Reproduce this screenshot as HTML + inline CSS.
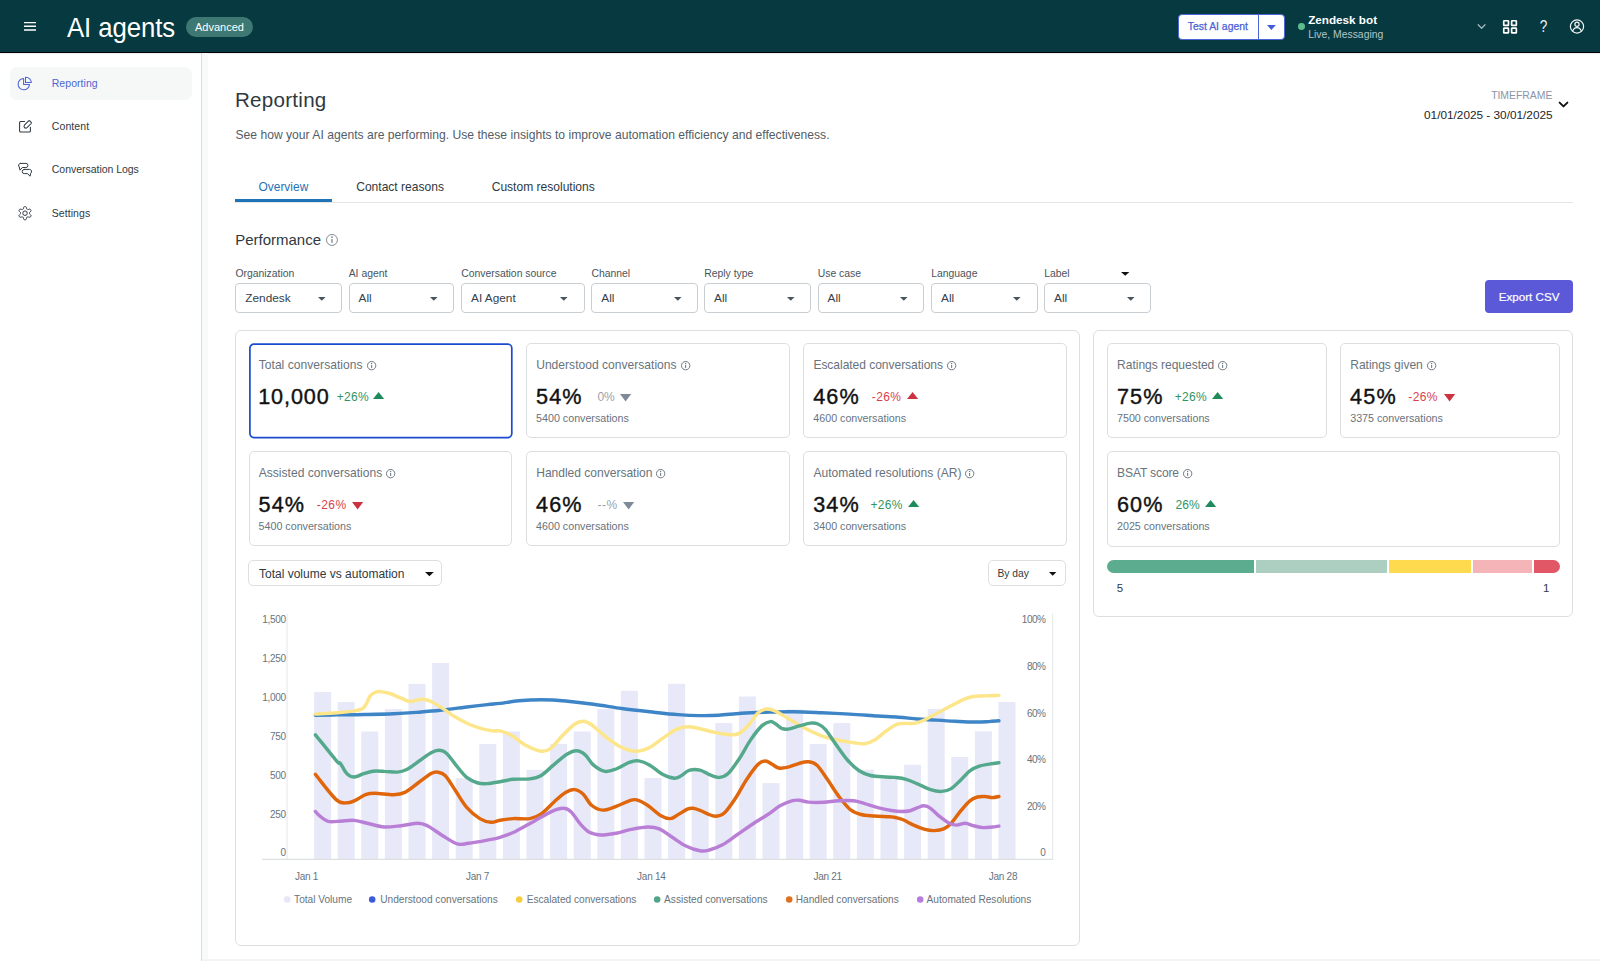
<!DOCTYPE html>
<html lang="en"><head><meta charset="utf-8"><title>AI agents - Reporting</title>
<style>
html,body{margin:0;padding:0;}
body{width:1600px;height:961px;position:relative;overflow:hidden;background:#fff;font-family:'Liberation Sans',Arial,sans-serif;color:#2f3941;-webkit-font-smoothing:antialiased;}
.t{position:absolute;white-space:pre;}
.b{position:absolute;box-sizing:border-box;}
svg{overflow:visible;display:block;}
</style></head><body>

<div class="b" style="left:0px;top:0px;width:1600px;height:52px;background:#063940;"></div>
<div class="b" style="left:0px;top:52px;width:1600px;height:1px;background:#020208;"></div>
<div class="b" style="left:0px;top:53px;width:1600px;height:1px;background:rgba(0,0,0,0.07);"></div>
<svg class="b" style="left:22px;top:20px" width="16" height="12" viewBox="22 20 16 12"><path d="M24 22.6H36M24 26.3H36M24 30H36" stroke="#fff" stroke-width="1.4" fill="none"/></svg>
<div class="t" style="left:67.0px;top:12px;font-size:27.3px;line-height:31px;color:#fff;font-weight:400;letter-spacing:-0.1px;transform:scaleX(0.944);transform-origin:0 50%;">AI agents</div>
<div class="b" style="left:186.2px;top:16.5px;width:66.4px;height:20.3px;background:#3d7873;border-radius:10.2px;"></div>
<div class="t" style="left:195px;top:21px;font-size:11px;line-height:12px;color:#fff;font-weight:400;">Advanced</div>
<div class="b" style="left:1178px;top:13.7px;width:106.6px;height:26.3px;background:#fff;border:1px solid #4b64d6;border-radius:4px;"></div>
<div class="b" style="left:1257.7px;top:14px;width:1px;height:25.6px;background:#4b64d6;"></div>
<div class="t" style="left:1187.8px;top:21px;font-size:10.4px;line-height:11px;color:#4a60d4;font-weight:400;-webkit-text-stroke:0.25px #4a60d4;">Test AI agent</div>
<svg class="b" style="left:1267.3px;top:24.6px" width="8.8" height="5.0" viewBox="0 0 8.8 5.0"><polygon points="0,0 8.8,0 4.4,5.0" fill="#3f5bd5"/></svg>
<div class="b" style="left:1298.1px;top:23.3px;width:6.8px;height:6.8px;background:#5ebb8e;border-radius:50%;"></div>
<div class="t" style="left:1308.2px;top:13px;font-size:11.7px;line-height:13px;color:#fff;font-weight:700;">Zendesk bot</div>
<div class="t" style="left:1308.2px;top:29px;font-size:10.4px;line-height:11px;color:#b4c6c9;font-weight:400;">Live, Messaging</div>
<svg class="b" style="left:1476px;top:22px" width="12" height="10" viewBox="1476 22 12 10"><path d="M1478.2 24.8 L1481.6 28.3 L1485 24.8" stroke="#a3b6b9" stroke-width="1.3" fill="none" stroke-linecap="round" stroke-linejoin="round"/></svg>
<svg class="b" style="left:1502px;top:19px" width="16" height="16" viewBox="1502 19 16 16"><g fill="none" stroke="#fff" stroke-width="1.7"><rect x="1503.75" y="20.75" width="4.7" height="4.7" rx="0.5"/><rect x="1511.65" y="20.75" width="4.7" height="4.7" rx="0.5"/><rect x="1503.75" y="28.2" width="4.7" height="4.7" rx="0.5"/><rect x="1511.65" y="28.2" width="4.7" height="4.7" rx="0.5"/></g></svg>
<div class="t" style="left:1538.6px;top:17px;font-size:16.2px;line-height:18px;color:#f0f4f4;font-weight:400;transform:scaleX(0.84);transform-origin:50% 50%;">?</div>
<svg class="b" style="left:1569px;top:18px" width="16" height="17" viewBox="1569 18 16 17"><g fill="none" stroke="#f2f5f5" stroke-width="1.2"><circle cx="1577" cy="26.5" r="6.6"/><circle cx="1577" cy="24.3" r="2.1"/><path d="M1572.6 31.2 C1573.6 28.4 1575.2 27.6 1577 27.6 C1578.8 27.6 1580.4 28.4 1581.4 31.2"/></g></svg>
<div class="b" style="left:201px;top:53px;width:1.2px;height:908px;background:#d9dce3;"></div>
<div class="b" style="left:202.2px;top:53px;width:5.8px;height:908px;background:#f8f9f9;"></div>
<div class="b" style="left:10.3px;top:66.6px;width:181.7px;height:33.4px;background:#f6f8f8;border-radius:7px;"></div>
<div class="t" style="left:51.7px;top:77px;font-size:10.5px;line-height:12px;color:#4e66d3;font-weight:400;letter-spacing:0.06px;">Reporting</div>
<div class="t" style="left:51.8px;top:120px;font-size:10.5px;line-height:12px;color:#2f3941;font-weight:400;letter-spacing:0.08px;">Content</div>
<div class="t" style="left:51.8px;top:163px;font-size:10.5px;line-height:12px;color:#2f3941;font-weight:400;letter-spacing:-0.03px;">Conversation Logs</div>
<div class="t" style="left:51.8px;top:207px;font-size:10.5px;line-height:12px;color:#2f3941;font-weight:400;letter-spacing:0.06px;">Settings</div>
<svg class="b" style="left:17px;top:75px" width="16" height="17" viewBox="17 75 16 17"><g fill="none" stroke="#4c63d2" stroke-width="1.05" stroke-linejoin="round"><path d="M23.6 78.4 A5.7 5.7 0 1 0 29.5 84.4 H23.6 Z"/><path d="M25.5 77.2 A5.6 5.6 0 0 1 31.3 82.5 H25.5 Z"/></g></svg>
<svg class="b" style="left:17px;top:118px" width="16" height="16" viewBox="17 118 16 16"><g fill="none" stroke="#2f3941" stroke-width="1.05" stroke-linecap="round" stroke-linejoin="round"><path d="M24.6 121.5 H20.6 A1 1 0 0 0 19.6 122.5 V131 A1 1 0 0 0 20.6 132 H29.4 A1 1 0 0 0 30.4 131 V127.2"/><path d="M24.4 125.2 L28.6 120.9 A0.8 0.8 0 0 1 29.7 120.9 L31.2 122.4 A0.8 0.8 0 0 1 31.2 123.5 L27 127.7 C26.2 128.3 24.9 128.2 24.5 127.6 C24 127 24 125.8 24.4 125.2 Z"/></g></svg>
<svg class="b" style="left:17px;top:161px" width="16" height="17" viewBox="17 161 16 17"><g fill="none" stroke="#2f3941" stroke-width="1.0" stroke-linecap="round" stroke-linejoin="round"><path d="M20.5 163.4 H25.9 A2.05 2.05 0 0 1 25.9 167.5 H22.3 L20 170.2 L19.3 167 A2.05 2.05 0 0 1 20.5 163.4 Z"/><path d="M24.3 169.4 H29.5 A2.1 2.1 0 0 1 30.7 173.2 L30.1 176.2 L27.4 173.6 H24.3 A2.1 2.1 0 0 1 24.3 169.4 Z"/></g></svg>
<svg class="b" style="left:17px;top:205px" width="16" height="17" viewBox="17 205 16 17"><g fill="none" stroke="#2f3941" stroke-width="1.0" stroke-linejoin="round"><path d="M29.50 213.20 L29.49 212.89 L29.46 212.57 L29.92 212.15 L30.50 211.62 L31.00 211.01 L31.03 210.52 L30.83 210.10 L30.60 209.70 L30.34 209.32 L29.90 209.09 L29.12 209.22 L28.37 209.46 L27.77 209.65 L27.52 209.47 L27.25 209.30 L26.97 209.16 L26.69 209.03 L26.55 208.42 L26.39 207.64 L26.11 206.91 L25.69 206.64 L25.23 206.60 L24.77 206.60 L24.31 206.64 L23.89 206.91 L23.61 207.64 L23.45 208.42 L23.31 209.03 L23.03 209.16 L22.75 209.30 L22.48 209.47 L22.23 209.65 L21.63 209.46 L20.88 209.22 L20.10 209.09 L19.66 209.32 L19.40 209.70 L19.17 210.10 L18.97 210.52 L19.00 211.01 L19.50 211.62 L20.08 212.15 L20.54 212.57 L20.51 212.89 L20.50 213.20 L20.51 213.51 L20.54 213.83 L20.08 214.25 L19.50 214.78 L19.00 215.39 L18.97 215.88 L19.17 216.30 L19.40 216.70 L19.66 217.08 L20.10 217.31 L20.88 217.18 L21.63 216.94 L22.23 216.75 L22.48 216.93 L22.75 217.10 L23.03 217.24 L23.31 217.37 L23.45 217.98 L23.61 218.76 L23.89 219.49 L24.31 219.76 L24.77 219.80 L25.23 219.80 L25.69 219.76 L26.11 219.49 L26.39 218.76 L26.55 217.98 L26.69 217.37 L26.97 217.24 L27.25 217.10 L27.52 216.93 L27.77 216.75 L28.37 216.94 L29.12 217.18 L29.90 217.31 L30.34 217.08 L30.60 216.70 L30.83 216.30 L31.03 215.88 L31.00 215.39 L30.50 214.78 L29.92 214.25 L29.46 213.83 L29.49 213.51 Z"/><circle cx="25" cy="213.2" r="2.25"/></g></svg>
<div class="t" style="left:235.0px;top:88px;font-size:20.6px;line-height:23px;color:#2f3941;font-weight:400;letter-spacing:0.25px;">Reporting</div>
<div class="t" style="left:235.5px;top:128px;font-size:12.14px;line-height:14px;color:#525d67;font-weight:400;">See how your AI agents are performing. Use these insights to improve automation efficiency and effectiveness.</div>
<div class="t" style="right:47.700000000000045px;top:90px;font-size:10.4px;line-height:11px;color:#8a94a6;font-weight:400;">TIMEFRAME</div>
<div class="t" style="right:47.40000000000009px;top:108px;font-size:11.8px;line-height:14px;color:#1f2529;font-weight:400;">01/01/2025 - 30/01/2025</div>
<svg class="b" style="left:1557px;top:100px" width="13" height="9" viewBox="1557 100 13 9"><path d="M1559.6 102.6 L1563.5 106.4 L1567.4 102.6" stroke="#111" stroke-width="1.9" fill="none" stroke-linecap="round" stroke-linejoin="round"/></svg>
<div class="t" style="left:258.5px;top:180px;font-size:11.95px;line-height:14px;color:#1f73b7;font-weight:400;">Overview</div>
<div class="t" style="left:356.2px;top:180px;font-size:12.05px;line-height:14px;color:#2f3941;font-weight:400;">Contact reasons</div>
<div class="t" style="left:491.7px;top:180px;font-size:12.05px;line-height:14px;color:#2f3941;font-weight:400;">Custom resolutions</div>
<div class="b" style="left:235px;top:202px;width:1338px;height:1px;background:#e3e6e8;"></div>
<div class="b" style="left:235px;top:199.4px;width:97.2px;height:2.8px;background:#1f73b7;"></div>
<div class="t" style="left:235.2px;top:231px;font-size:15px;line-height:17px;color:#2f3941;font-weight:400;">Performance</div>
<svg class="b" style="left:325.15px;top:233.45px" width="13.90" height="13.90" viewBox="-6.95 -6.95 13.90 13.90"><circle cx="0" cy="0" r="5.48" fill="none" stroke="#7b8690" stroke-width="0.95"/><rect x="-0.66" y="-0.93" width="1.32" height="3.83" fill="#7b8690"/><circle cx="0" cy="-2.78" r="0.86" fill="#7b8690"/></svg>
<div class="t" style="left:235.45px;top:268px;font-size:10.4px;line-height:11px;color:#49545c;font-weight:400;">Organization</div>
<div class="b" style="left:235.25px;top:283.4px;width:106.75px;height:29.4px;border:1px solid #c9ced2;border-radius:4px;background:#fff;"></div>
<div class="t" style="left:245.35px;top:291px;font-size:11.8px;line-height:14px;color:#36414b;font-weight:400;">Zendesk</div>
<svg class="b" style="left:317.9px;top:296.54999999999995px" width="7.6" height="3.7" viewBox="0 0 7.6 3.7"><polygon points="0,0 7.6,0 3.8,3.7" fill="#49545c"/></svg>
<div class="t" style="left:348.7px;top:268px;font-size:10.4px;line-height:11px;color:#49545c;font-weight:400;">AI agent</div>
<div class="b" style="left:348.5px;top:283.4px;width:105.75px;height:29.4px;border:1px solid #c9ced2;border-radius:4px;background:#fff;"></div>
<div class="t" style="left:358.6px;top:291px;font-size:11.8px;line-height:14px;color:#36414b;font-weight:400;">All</div>
<svg class="b" style="left:430.15px;top:296.54999999999995px" width="7.6" height="3.7" viewBox="0 0 7.6 3.7"><polygon points="0,0 7.6,0 3.8,3.7" fill="#49545c"/></svg>
<div class="t" style="left:461.2px;top:268px;font-size:10.4px;line-height:11px;color:#49545c;font-weight:400;">Conversation source</div>
<div class="b" style="left:461px;top:283.4px;width:123.5px;height:29.4px;border:1px solid #c9ced2;border-radius:4px;background:#fff;"></div>
<div class="t" style="left:471.1px;top:291px;font-size:11.8px;line-height:14px;color:#36414b;font-weight:400;">AI Agent</div>
<svg class="b" style="left:560.4000000000001px;top:296.54999999999995px" width="7.6" height="3.7" viewBox="0 0 7.6 3.7"><polygon points="0,0 7.6,0 3.8,3.7" fill="#49545c"/></svg>
<div class="t" style="left:591.45px;top:268px;font-size:10.4px;line-height:11px;color:#49545c;font-weight:400;">Channel</div>
<div class="b" style="left:591.25px;top:283.4px;width:106.54999999999995px;height:29.4px;border:1px solid #c9ced2;border-radius:4px;background:#fff;"></div>
<div class="t" style="left:601.35px;top:291px;font-size:11.8px;line-height:14px;color:#36414b;font-weight:400;">All</div>
<svg class="b" style="left:673.7px;top:296.54999999999995px" width="7.6" height="3.7" viewBox="0 0 7.6 3.7"><polygon points="0,0 7.6,0 3.8,3.7" fill="#49545c"/></svg>
<div class="t" style="left:704.2px;top:268px;font-size:10.4px;line-height:11px;color:#49545c;font-weight:400;">Reply type</div>
<div class="b" style="left:704px;top:283.4px;width:106.79999999999995px;height:29.4px;border:1px solid #c9ced2;border-radius:4px;background:#fff;"></div>
<div class="t" style="left:714.1px;top:291px;font-size:11.8px;line-height:14px;color:#36414b;font-weight:400;">All</div>
<svg class="b" style="left:786.7px;top:296.54999999999995px" width="7.6" height="3.7" viewBox="0 0 7.6 3.7"><polygon points="0,0 7.6,0 3.8,3.7" fill="#49545c"/></svg>
<div class="t" style="left:817.7px;top:268px;font-size:10.4px;line-height:11px;color:#49545c;font-weight:400;">Use case</div>
<div class="b" style="left:817.5px;top:283.4px;width:106.5px;height:29.4px;border:1px solid #c9ced2;border-radius:4px;background:#fff;"></div>
<div class="t" style="left:827.6px;top:291px;font-size:11.8px;line-height:14px;color:#36414b;font-weight:400;">All</div>
<svg class="b" style="left:899.9000000000001px;top:296.54999999999995px" width="7.6" height="3.7" viewBox="0 0 7.6 3.7"><polygon points="0,0 7.6,0 3.8,3.7" fill="#49545c"/></svg>
<div class="t" style="left:931.2px;top:268px;font-size:10.4px;line-height:11px;color:#49545c;font-weight:400;">Language</div>
<div class="b" style="left:931px;top:283.4px;width:106.5px;height:29.4px;border:1px solid #c9ced2;border-radius:4px;background:#fff;"></div>
<div class="t" style="left:941.1px;top:291px;font-size:11.8px;line-height:14px;color:#36414b;font-weight:400;">All</div>
<svg class="b" style="left:1013.4000000000001px;top:296.54999999999995px" width="7.6" height="3.7" viewBox="0 0 7.6 3.7"><polygon points="0,0 7.6,0 3.8,3.7" fill="#49545c"/></svg>
<div class="t" style="left:1044.2px;top:268px;font-size:10.4px;line-height:11px;color:#49545c;font-weight:400;">Label</div>
<div class="b" style="left:1044px;top:283.4px;width:107.0px;height:29.4px;border:1px solid #c9ced2;border-radius:4px;background:#fff;"></div>
<div class="t" style="left:1054.1px;top:291px;font-size:11.8px;line-height:14px;color:#36414b;font-weight:400;">All</div>
<svg class="b" style="left:1126.9px;top:296.54999999999995px" width="7.6" height="3.7" viewBox="0 0 7.6 3.7"><polygon points="0,0 7.6,0 3.8,3.7" fill="#49545c"/></svg>
<svg class="b" style="left:1120.6px;top:272.3px" width="8.4" height="3.8" viewBox="0 0 8.4 3.8"><polygon points="0,0 8.4,0 4.2,3.8" fill="#111"/></svg>
<div class="b" style="left:1485px;top:280px;width:88px;height:33px;background:#5c59d9;border-radius:4px;"></div>
<div class="t" style="left:1379.1px;width:300px;text-align:center;top:291px;font-size:11.6px;line-height:12px;color:#fff;font-weight:400;-webkit-text-stroke:0.2px #fff;">Export CSV</div>
<div class="b" style="left:235px;top:330px;width:845px;height:616px;border:1px solid #dcdfe2;border-radius:6px;"></div>
<div class="b" style="left:1093px;top:330px;width:480px;height:287px;border:1px solid #dcdfe2;border-radius:6px;"></div>
<svg class="b" style="left:247.5px;top:342px" width="265.5" height="97" viewBox="-1 -1 265.5 97"><rect x="0.9" y="1.2" width="261.9" height="93.4" rx="4" fill="#fff" stroke="#1b4bcf" stroke-width="1.7"/></svg>
<div class="t" style="left:258.7px;top:358px;font-size:12.05px;line-height:14px;color:#68737d;font-weight:400;letter-spacing:0.041px;">Total conversations</div>
<div class="t" style="left:258.2px;top:384px;font-size:21.6px;line-height:25px;color:#111;font-weight:400;letter-spacing:0.9px;-webkit-text-stroke:0.4px #111;">10,000</div>
<div class="b" style="left:526px;top:343px;width:263.5px;height:95px;border:1px solid #dcdfe2;border-radius:5px;background:#fff;"></div>
<div class="t" style="left:536.2px;top:358px;font-size:12.05px;line-height:14px;color:#68737d;font-weight:400;letter-spacing:0.018px;">Understood conversations</div>
<div class="t" style="left:536.0px;top:384px;font-size:21.6px;line-height:25px;color:#111;font-weight:400;letter-spacing:1.15px;-webkit-text-stroke:0.4px #111;">54%</div>
<div class="b" style="left:803.2px;top:343px;width:263.5px;height:95px;border:1px solid #dcdfe2;border-radius:5px;background:#fff;"></div>
<div class="t" style="left:813.4000000000001px;top:358px;font-size:12.05px;line-height:14px;color:#68737d;font-weight:400;letter-spacing:-0.043px;">Escalated conversations</div>
<div class="t" style="left:813.2px;top:384px;font-size:21.6px;line-height:25px;color:#111;font-weight:400;letter-spacing:1.15px;-webkit-text-stroke:0.4px #111;">46%</div>
<div class="b" style="left:248.5px;top:451px;width:263.5px;height:95px;border:1px solid #dcdfe2;border-radius:5px;background:#fff;"></div>
<div class="t" style="left:258.7px;top:466px;font-size:12.05px;line-height:14px;color:#68737d;font-weight:400;letter-spacing:0.017px;">Assisted conversations</div>
<div class="t" style="left:258.5px;top:492px;font-size:21.6px;line-height:25px;color:#111;font-weight:400;letter-spacing:1.15px;-webkit-text-stroke:0.4px #111;">54%</div>
<div class="b" style="left:526px;top:451px;width:263.5px;height:95px;border:1px solid #dcdfe2;border-radius:5px;background:#fff;"></div>
<div class="t" style="left:536.2px;top:466px;font-size:12.05px;line-height:14px;color:#68737d;font-weight:400;letter-spacing:-0.012px;">Handled conversation</div>
<div class="t" style="left:536.0px;top:492px;font-size:21.6px;line-height:25px;color:#111;font-weight:400;letter-spacing:1.15px;-webkit-text-stroke:0.4px #111;">46%</div>
<div class="b" style="left:803.2px;top:451px;width:263.5px;height:95px;border:1px solid #dcdfe2;border-radius:5px;background:#fff;"></div>
<div class="t" style="left:813.4000000000001px;top:466px;font-size:12.05px;line-height:14px;color:#68737d;font-weight:400;letter-spacing:0.001px;">Automated resolutions (AR)</div>
<div class="t" style="left:813.2px;top:492px;font-size:21.6px;line-height:25px;color:#111;font-weight:400;letter-spacing:1.15px;-webkit-text-stroke:0.4px #111;">34%</div>
<div class="b" style="left:1106.9px;top:343px;width:219.8px;height:95px;border:1px solid #dcdfe2;border-radius:5px;background:#fff;"></div>
<div class="t" style="left:1117.1000000000001px;top:358px;font-size:12.05px;line-height:14px;color:#68737d;font-weight:400;letter-spacing:-0.034px;">Ratings requested</div>
<div class="t" style="left:1116.9px;top:384px;font-size:21.6px;line-height:25px;color:#111;font-weight:400;letter-spacing:1.15px;-webkit-text-stroke:0.4px #111;">75%</div>
<div class="b" style="left:1340.1px;top:343px;width:219.8px;height:95px;border:1px solid #dcdfe2;border-radius:5px;background:#fff;"></div>
<div class="t" style="left:1350.3px;top:358px;font-size:12.05px;line-height:14px;color:#68737d;font-weight:400;letter-spacing:-0.046px;">Ratings given</div>
<div class="t" style="left:1350.1px;top:384px;font-size:21.6px;line-height:25px;color:#111;font-weight:400;letter-spacing:1.15px;-webkit-text-stroke:0.4px #111;">45%</div>
<div class="b" style="left:1106.9px;top:451px;width:453px;height:95.5px;border:1px solid #dcdfe2;border-radius:5px;background:#fff;"></div>
<div class="t" style="left:1117.1000000000001px;top:466px;font-size:12.05px;line-height:14px;color:#68737d;font-weight:400;letter-spacing:-0.137px;">BSAT score</div>
<div class="t" style="left:1116.9px;top:492px;font-size:21.6px;line-height:25px;color:#111;font-weight:400;letter-spacing:1.15px;-webkit-text-stroke:0.4px #111;">60%</div>
<svg class="b" style="left:365.55px;top:359.55px" width="11.30" height="11.30" viewBox="-5.65 -5.65 11.30 11.30"><circle cx="0" cy="0" r="4.18" fill="none" stroke="#68737d" stroke-width="0.95"/><rect x="-0.52" y="-0.72" width="1.03" height="3.00" fill="#68737d"/><circle cx="0" cy="-2.17" r="0.67" fill="#68737d"/></svg>
<svg class="b" style="left:679.55px;top:359.55px" width="11.30" height="11.30" viewBox="-5.65 -5.65 11.30 11.30"><circle cx="0" cy="0" r="4.18" fill="none" stroke="#68737d" stroke-width="0.95"/><rect x="-0.52" y="-0.72" width="1.03" height="3.00" fill="#68737d"/><circle cx="0" cy="-2.17" r="0.67" fill="#68737d"/></svg>
<svg class="b" style="left:945.95px;top:359.55px" width="11.30" height="11.30" viewBox="-5.65 -5.65 11.30 11.30"><circle cx="0" cy="0" r="4.18" fill="none" stroke="#68737d" stroke-width="0.95"/><rect x="-0.52" y="-0.72" width="1.03" height="3.00" fill="#68737d"/><circle cx="0" cy="-2.17" r="0.67" fill="#68737d"/></svg>
<svg class="b" style="left:385.25px;top:467.55px" width="11.30" height="11.30" viewBox="-5.65 -5.65 11.30 11.30"><circle cx="0" cy="0" r="4.18" fill="none" stroke="#68737d" stroke-width="0.95"/><rect x="-0.52" y="-0.72" width="1.03" height="3.00" fill="#68737d"/><circle cx="0" cy="-2.17" r="0.67" fill="#68737d"/></svg>
<svg class="b" style="left:655.45px;top:467.55px" width="11.30" height="11.30" viewBox="-5.65 -5.65 11.30 11.30"><circle cx="0" cy="0" r="4.18" fill="none" stroke="#68737d" stroke-width="0.95"/><rect x="-0.52" y="-0.72" width="1.03" height="3.00" fill="#68737d"/><circle cx="0" cy="-2.17" r="0.67" fill="#68737d"/></svg>
<svg class="b" style="left:964.35px;top:467.55px" width="11.30" height="11.30" viewBox="-5.65 -5.65 11.30 11.30"><circle cx="0" cy="0" r="4.18" fill="none" stroke="#68737d" stroke-width="0.95"/><rect x="-0.52" y="-0.72" width="1.03" height="3.00" fill="#68737d"/><circle cx="0" cy="-2.17" r="0.67" fill="#68737d"/></svg>
<svg class="b" style="left:1217.25px;top:359.55px" width="11.30" height="11.30" viewBox="-5.65 -5.65 11.30 11.30"><circle cx="0" cy="0" r="4.18" fill="none" stroke="#68737d" stroke-width="0.95"/><rect x="-0.52" y="-0.72" width="1.03" height="3.00" fill="#68737d"/><circle cx="0" cy="-2.17" r="0.67" fill="#68737d"/></svg>
<svg class="b" style="left:1425.65px;top:359.55px" width="11.30" height="11.30" viewBox="-5.65 -5.65 11.30 11.30"><circle cx="0" cy="0" r="4.18" fill="none" stroke="#68737d" stroke-width="0.95"/><rect x="-0.52" y="-0.72" width="1.03" height="3.00" fill="#68737d"/><circle cx="0" cy="-2.17" r="0.67" fill="#68737d"/></svg>
<svg class="b" style="left:1181.85px;top:467.55px" width="11.30" height="11.30" viewBox="-5.65 -5.65 11.30 11.30"><circle cx="0" cy="0" r="4.18" fill="none" stroke="#68737d" stroke-width="0.95"/><rect x="-0.52" y="-0.72" width="1.03" height="3.00" fill="#68737d"/><circle cx="0" cy="-2.17" r="0.67" fill="#68737d"/></svg>
<div class="t" style="left:336.65px;top:390px;font-size:12px;line-height:14px;color:#2f9461;font-weight:400;letter-spacing:0.3px;">+26%</div>
<svg class="b" style="left:373.4px;top:392.2px" width="11.2" height="6.9" viewBox="0 0 11.2 6.9"><polygon points="0,6.9 5.6,0 11.2,6.9" fill="#1f8a5b"/></svg>
<div class="t" style="left:597.4px;top:390px;font-size:12px;line-height:14px;color:#9aa3ad;font-weight:400;">0%</div>
<svg class="b" style="left:620.0px;top:393.8px" width="11.2" height="7.4" viewBox="0 0 11.2 7.4"><polygon points="0,0 11.2,0 5.6,7.4" fill="#7f8a99"/></svg>
<div class="t" style="left:536.1px;top:412px;font-size:10.7px;line-height:12px;color:#68737d;font-weight:400;">5400 conversations</div>
<div class="t" style="left:871.75px;top:390px;font-size:12px;line-height:14px;color:#d93f4c;font-weight:400;letter-spacing:0.4px;">-26%</div>
<svg class="b" style="left:906.6px;top:392.2px" width="11.2" height="6.9" viewBox="0 0 11.2 6.9"><polygon points="0,6.9 5.6,0 11.2,6.9" fill="#cc3340"/></svg>
<div class="t" style="left:813.3000000000001px;top:412px;font-size:10.7px;line-height:12px;color:#68737d;font-weight:400;">4600 conversations</div>
<div class="t" style="left:316.85px;top:498px;font-size:12px;line-height:14px;color:#d93f4c;font-weight:400;letter-spacing:0.4px;">-26%</div>
<svg class="b" style="left:351.8px;top:501.8px" width="11.2" height="7.4" viewBox="0 0 11.2 7.4"><polygon points="0,0 11.2,0 5.6,7.4" fill="#cc3340"/></svg>
<div class="t" style="left:258.6px;top:520px;font-size:10.7px;line-height:12px;color:#68737d;font-weight:400;">5400 conversations</div>
<div class="t" style="left:597.55px;top:498px;font-size:12px;line-height:14px;color:#9aa3ad;font-weight:400;letter-spacing:0.5px;">--%</div>
<svg class="b" style="left:623.2px;top:501.8px" width="11.2" height="7.4" viewBox="0 0 11.2 7.4"><polygon points="0,0 11.2,0 5.6,7.4" fill="#7f8a99"/></svg>
<div class="t" style="left:536.1px;top:520px;font-size:10.7px;line-height:12px;color:#68737d;font-weight:400;">4600 conversations</div>
<div class="t" style="left:870.5px;top:498px;font-size:12px;line-height:14px;color:#2f9461;font-weight:400;letter-spacing:0.3px;">+26%</div>
<svg class="b" style="left:908.0px;top:500.2px" width="11.2" height="6.9" viewBox="0 0 11.2 6.9"><polygon points="0,6.9 5.6,0 11.2,6.9" fill="#1f8a5b"/></svg>
<div class="t" style="left:813.3000000000001px;top:520px;font-size:10.7px;line-height:12px;color:#68737d;font-weight:400;">3400 conversations</div>
<div class="t" style="left:1174.7px;top:390px;font-size:12px;line-height:14px;color:#2f9461;font-weight:400;letter-spacing:0.3px;">+26%</div>
<svg class="b" style="left:1211.8px;top:392.2px" width="11.2" height="6.9" viewBox="0 0 11.2 6.9"><polygon points="0,6.9 5.6,0 11.2,6.9" fill="#1f8a5b"/></svg>
<div class="t" style="left:1117.0px;top:412px;font-size:10.7px;line-height:12px;color:#68737d;font-weight:400;">7500 conversations</div>
<div class="t" style="left:1408.25px;top:390px;font-size:12px;line-height:14px;color:#d93f4c;font-weight:400;letter-spacing:0.4px;">-26%</div>
<svg class="b" style="left:1443.7px;top:393.8px" width="11.2" height="7.4" viewBox="0 0 11.2 7.4"><polygon points="0,0 11.2,0 5.6,7.4" fill="#cc3340"/></svg>
<div class="t" style="left:1350.1999999999998px;top:412px;font-size:10.7px;line-height:12px;color:#68737d;font-weight:400;">3375 conversations</div>
<div class="t" style="left:1175.45px;top:498px;font-size:12px;line-height:14px;color:#2f9461;font-weight:400;letter-spacing:0.1px;">26%</div>
<svg class="b" style="left:1205.2px;top:500.2px" width="11.2" height="6.9" viewBox="0 0 11.2 6.9"><polygon points="0,6.9 5.6,0 11.2,6.9" fill="#1f8a5b"/></svg>
<div class="t" style="left:1117.0px;top:520px;font-size:10.7px;line-height:12px;color:#68737d;font-weight:400;">2025 conversations</div>
<div class="b" style="left:1106.9px;top:560px;width:452.9px;height:13.1px;border-radius:6.6px;overflow:hidden;">
<div class="b" style="left:0.0px;top:0;width:147.2px;height:13.1px;background:#5cad90"></div>
<div class="b" style="left:149.1px;top:0;width:131.0px;height:13.1px;background:#adcfc1"></div>
<div class="b" style="left:282.2px;top:0;width:81.6px;height:13.1px;background:#fdda4e"></div>
<div class="b" style="left:365.9px;top:0;width:59.4px;height:13.1px;background:#f5b4b8"></div>
<div class="b" style="left:427.3px;top:0;width:25.6px;height:13.1px;background:#e25766"></div>
</div>
<div class="t" style="left:1116.8px;top:582px;font-size:11.5px;line-height:12px;color:#2f3941;font-weight:400;">5</div>
<div class="t" style="right:50.59999999999991px;top:582px;font-size:11.5px;line-height:12px;color:#2f3941;font-weight:400;">1</div>
<div class="b" style="left:248.2px;top:560px;width:194.2px;height:26px;border:1px solid #dde0e3;border-radius:5px;background:#fff;"></div>
<div class="t" style="left:259px;top:567px;font-size:12px;line-height:14px;color:#2f3941;font-weight:400;">Total volume vs automation</div>
<svg class="b" style="left:424.70000000000005px;top:571.95px" width="8.8" height="4.3" viewBox="0 0 8.8 4.3"><polygon points="0,0 8.8,0 4.4,4.3" fill="#111"/></svg>
<div class="b" style="left:987.7px;top:560px;width:78.8px;height:26px;border:1px solid #dde0e3;border-radius:5px;background:#fff;"></div>
<div class="t" style="left:997.4px;top:568px;font-size:10.3px;line-height:11px;color:#2f3941;font-weight:400;">By day</div>
<svg class="b" style="left:1049.3px;top:572.2px" width="7.4" height="3.8" viewBox="0 0 7.4 3.8"><polygon points="0,0 7.4,0 3.7,3.8" fill="#111"/></svg>
<svg class="b" style="left:0;top:600px" width="1100" height="290" viewBox="0 600 1100 290"><rect x="314.1" y="692.0" width="17.0" height="167.0" fill="#e8e9f8"/><rect x="337.7" y="702.0" width="17.0" height="157.0" fill="#e8e9f8"/><rect x="361.3" y="731.5" width="17.0" height="127.5" fill="#e8e9f8"/><rect x="384.9" y="709.1" width="17.0" height="149.9" fill="#e8e9f8"/><rect x="408.5" y="683.9" width="17.0" height="175.1" fill="#e8e9f8"/><rect x="432.1" y="663.0" width="17.0" height="196.0" fill="#e8e9f8"/><rect x="455.7" y="778.1" width="17.0" height="80.9" fill="#e8e9f8"/><rect x="479.3" y="744.0" width="17.0" height="115.0" fill="#e8e9f8"/><rect x="502.9" y="731.5" width="17.0" height="127.5" fill="#e8e9f8"/><rect x="526.5" y="769.8" width="17.0" height="89.2" fill="#e8e9f8"/><rect x="550.1" y="744.0" width="17.0" height="115.0" fill="#e8e9f8"/><rect x="573.7" y="731.5" width="17.0" height="127.5" fill="#e8e9f8"/><rect x="597.3" y="709.1" width="17.0" height="149.9" fill="#e8e9f8"/><rect x="620.9" y="690.8" width="17.0" height="168.2" fill="#e8e9f8"/><rect x="644.5" y="778.0" width="17.0" height="81.0" fill="#e8e9f8"/><rect x="668.1" y="683.8" width="17.0" height="175.2" fill="#e8e9f8"/><rect x="691.7" y="771.0" width="17.0" height="88.0" fill="#e8e9f8"/><rect x="715.3" y="723.1" width="17.0" height="135.9" fill="#e8e9f8"/><rect x="738.9" y="696.5" width="17.0" height="162.5" fill="#e8e9f8"/><rect x="762.5" y="783.1" width="17.0" height="75.9" fill="#e8e9f8"/><rect x="786.1" y="709.4" width="17.0" height="149.6" fill="#e8e9f8"/><rect x="809.7" y="744.0" width="17.0" height="115.0" fill="#e8e9f8"/><rect x="833.3" y="723.1" width="17.0" height="135.9" fill="#e8e9f8"/><rect x="856.9" y="769.8" width="17.0" height="89.2" fill="#e8e9f8"/><rect x="880.5" y="779.0" width="17.0" height="80.0" fill="#e8e9f8"/><rect x="904.1" y="764.8" width="17.0" height="94.2" fill="#e8e9f8"/><rect x="927.7" y="709.0" width="17.0" height="150.0" fill="#e8e9f8"/><rect x="951.3" y="757.0" width="17.0" height="102.0" fill="#e8e9f8"/><rect x="974.9" y="731.3" width="17.0" height="127.7" fill="#e8e9f8"/><rect x="998.5" y="702.0" width="17.0" height="157.0" fill="#e8e9f8"/><path d="M287 613.3V859M1052.7 613.3V859" stroke="#e3e6e8" stroke-width="1" fill="none"/><path d="M262 859.3H1053.2" stroke="#d5d9dc" stroke-width="1" fill="none"/><path d="M315.4 715.2 C319.1 715.2 329.1 715.0 337.5 714.9 C345.9 714.8 356.1 714.7 365.5 714.5 C374.9 714.3 385.2 714.1 393.6 713.7 C402.0 713.4 408.3 713.0 416.1 712.4 C423.9 711.8 432.3 711.2 440.4 710.3 C448.5 709.4 457.0 708.2 464.8 707.2 C472.6 706.2 481.4 705.2 487.3 704.6 C493.2 704.0 494.8 704.0 500.0 703.4 C505.2 702.8 511.8 701.4 518.7 700.8 C525.6 700.2 533.4 699.8 541.2 699.8 C549.0 699.8 556.8 700.2 565.5 701.0 C574.2 701.8 584.2 703.0 593.6 704.3 C603.0 705.5 612.3 707.2 621.7 708.5 C631.1 709.8 640.4 710.8 649.8 711.8 C659.2 712.8 669.5 714.0 677.9 714.6 C686.3 715.2 693.2 715.5 700.0 715.6 C706.8 715.7 711.8 715.6 718.7 715.2 C725.6 714.8 733.4 713.8 741.2 713.3 C749.0 712.8 756.8 712.5 765.5 712.2 C774.2 712.0 784.2 711.7 793.6 711.8 C803.0 711.9 812.3 712.4 821.7 712.8 C831.1 713.2 840.4 713.6 849.8 714.1 C859.2 714.6 869.8 715.5 877.9 716.0 C886.0 716.5 892.1 716.7 898.7 717.2 C905.3 717.7 911.2 718.5 917.5 719.0 C923.8 719.5 930.0 719.7 936.2 720.1 C942.4 720.5 948.7 720.9 954.9 721.2 C961.1 721.5 968.0 721.9 973.6 722.0 C979.2 722.1 984.4 721.8 988.6 721.6 C992.8 721.4 997.2 720.9 998.9 720.8" stroke="#3d85c6" stroke-width="3.45" fill="none" stroke-linecap="round" stroke-linejoin="round"/><path d="M315.4 714.1 C319.1 713.9 331.0 713.3 337.5 712.8 C344.0 712.3 350.1 711.6 354.3 710.9 C358.5 710.2 360.7 709.8 362.7 708.5 C364.7 707.2 365.2 705.5 366.5 703.4 C367.8 701.3 368.8 697.7 370.2 695.9 C371.6 694.1 373.2 693.2 374.9 692.5 C376.6 691.8 378.0 691.4 380.5 691.6 C383.0 691.8 386.5 692.4 389.9 693.5 C393.3 694.6 397.8 696.9 401.1 698.2 C404.4 699.5 407.1 701.2 409.6 701.5 C412.1 701.8 413.9 700.6 416.1 700.2 C418.3 699.8 420.2 699.1 422.7 699.3 C425.2 699.5 427.8 700.0 431.1 701.5 C434.4 703.0 438.2 705.5 442.3 708.1 C446.4 710.7 451.0 714.5 455.4 717.1 C459.8 719.8 464.1 722.1 468.5 724.0 C472.9 725.9 477.5 727.6 481.6 728.7 C485.7 729.9 489.8 730.5 492.9 730.9 C496.0 731.3 496.9 730.2 500.0 730.9 C503.1 731.6 506.8 732.8 511.2 735.2 C515.6 737.6 521.2 742.8 526.2 745.5 C531.2 748.2 537.1 750.7 541.2 751.2 C545.3 751.7 547.2 750.9 550.6 748.4 C554.0 745.9 557.8 740.3 561.8 736.2 C565.8 732.1 571.3 726.5 574.9 724.0 C578.5 721.5 580.5 721.1 583.3 721.2 C586.1 721.4 588.2 722.4 591.8 724.9 C595.4 727.4 600.2 732.6 604.9 736.2 C609.6 739.8 614.9 744.0 619.9 746.5 C624.9 749.0 630.1 750.9 634.8 751.2 C639.5 751.5 643.2 750.6 647.9 748.4 C652.6 746.2 658.2 741.2 662.9 738.1 C667.6 735.0 671.9 731.5 676.0 729.6 C680.1 727.7 683.3 726.9 687.3 726.8 C691.3 726.6 695.4 727.8 700.0 728.7 C704.6 729.6 710.0 731.4 715.0 732.4 C720.0 733.4 726.0 734.5 730.0 734.7 C734.0 734.9 736.2 735.0 739.3 733.4 C742.4 731.8 745.6 728.3 748.7 724.9 C751.8 721.5 755.1 715.4 758.1 712.8 C761.1 710.1 763.7 709.3 766.5 709.0 C769.3 708.7 771.3 709.3 774.9 710.9 C778.5 712.5 783.0 715.5 788.0 718.4 C793.0 721.3 799.3 725.4 804.9 728.3 C810.5 731.2 816.1 733.8 821.7 735.8 C827.3 737.8 833.3 739.1 838.6 740.3 C843.9 741.4 849.2 742.1 853.6 742.7 C858.0 743.3 861.4 744.1 864.8 743.7 C868.2 743.3 870.8 742.3 874.2 740.3 C877.6 738.3 882.0 734.0 885.4 731.5 C888.8 729.0 892.3 726.5 894.8 725.2 C897.3 723.9 898.6 723.9 900.5 723.6 C902.4 723.3 903.7 723.5 906.2 723.4 C908.7 723.3 912.5 723.7 915.6 723.1 C918.7 722.5 921.5 721.3 924.9 719.7 C928.3 718.1 931.8 716.0 936.2 713.7 C940.6 711.4 946.5 708.2 951.2 705.8 C955.9 703.4 960.6 700.6 964.3 699.1 C968.0 697.6 970.2 697.0 973.6 696.5 C977.0 696.0 980.7 696.1 984.9 695.9 C989.1 695.7 996.6 695.5 998.9 695.4" stroke="#fde58a" stroke-width="3.45" fill="none" stroke-linecap="round" stroke-linejoin="round"/><path d="M315.4 734.8 C318.9 739.1 332.4 756.1 336.5 760.9 C340.6 765.6 338.6 761.2 340.3 763.3 C342.0 765.4 344.5 771.3 346.8 773.6 C349.1 775.9 351.5 777.0 354.3 777.0 C357.1 777.0 360.6 774.6 363.7 773.6 C366.8 772.6 369.6 771.6 373.0 771.2 C376.4 770.8 380.2 771.2 384.3 771.4 C388.4 771.5 393.7 772.4 397.4 772.1 C401.1 771.8 402.9 771.4 406.7 769.5 C410.4 767.6 415.8 763.3 419.9 760.5 C424.0 757.7 428.0 754.4 431.1 752.7 C434.2 751.0 436.1 750.2 438.6 750.2 C441.1 750.2 443.3 750.6 446.1 753.0 C448.9 755.4 452.0 760.2 455.4 764.3 C458.8 768.4 462.9 774.3 466.7 777.4 C470.4 780.5 474.5 782.0 477.9 783.0 C481.3 784.0 483.6 783.8 487.3 783.6 C491.0 783.4 495.7 782.4 500.0 781.7 C504.3 781.0 508.1 779.8 513.1 779.3 C518.1 778.8 525.3 779.5 530.0 778.9 C534.7 778.3 537.2 777.9 541.2 775.5 C545.2 773.1 549.9 767.9 554.3 764.3 C558.7 760.7 563.6 756.2 567.4 754.0 C571.1 751.8 573.8 750.6 576.8 750.8 C579.8 750.9 582.4 752.5 585.2 754.9 C588.0 757.3 590.3 762.5 593.6 765.2 C596.9 768.0 601.1 770.8 604.9 771.4 C608.6 772.0 612.0 770.5 616.1 769.0 C620.2 767.5 625.5 763.8 629.2 762.4 C633.0 761.0 635.2 760.4 638.6 760.9 C642.0 761.4 645.8 762.9 649.8 765.2 C653.8 767.5 658.8 772.4 662.9 774.6 C667.0 776.8 671.1 778.1 674.2 778.3 C677.3 778.4 679.1 776.8 681.6 775.5 C684.1 774.2 686.0 771.2 689.1 770.3 C692.2 769.4 696.6 769.4 700.0 770.1 C703.4 770.8 706.1 773.4 709.4 774.6 C712.7 775.8 716.6 777.6 719.7 777.4 C722.8 777.2 724.8 776.7 728.1 773.6 C731.4 770.5 735.5 764.3 739.3 758.7 C743.0 753.1 746.9 745.4 750.6 739.9 C754.4 734.4 758.5 728.9 761.8 725.9 C765.1 722.9 767.9 721.9 770.2 721.6 C772.5 721.3 773.9 722.9 775.8 724.0 C777.7 725.1 779.5 727.4 781.5 728.3 C783.5 729.1 785.0 729.5 788.0 729.1 C791.0 728.7 795.5 726.9 799.3 725.9 C803.0 724.9 807.4 723.4 810.5 723.1 C813.6 722.8 815.5 722.9 818.0 724.0 C820.5 725.1 822.4 726.0 825.5 729.6 C828.6 733.2 833.0 740.4 836.7 745.5 C840.4 750.6 844.1 756.3 847.9 760.5 C851.6 764.7 855.5 768.3 859.2 770.8 C863.0 773.3 866.0 774.5 870.4 775.5 C874.8 776.5 881.3 776.7 885.4 777.0 C889.5 777.3 891.5 777.0 895.0 777.4 C898.5 777.8 902.5 778.2 906.2 779.3 C910.0 780.4 913.4 782.2 917.5 783.9 C921.6 785.6 926.6 788.4 930.6 789.6 C934.6 790.9 938.4 791.6 941.8 791.4 C945.2 791.2 948.1 790.5 951.2 788.6 C954.3 786.7 957.4 783.2 960.5 780.2 C963.6 777.2 966.8 773.1 969.9 770.8 C973.0 768.4 975.9 767.2 979.3 766.1 C982.7 765.0 987.2 764.5 990.5 763.9 C993.8 763.3 997.5 763.0 998.9 762.8" stroke="#54a88b" stroke-width="3.45" fill="none" stroke-linecap="round" stroke-linejoin="round"/><path d="M315.4 774.4 C318.9 778.6 331.1 795.2 336.5 799.9 C341.9 804.6 344.5 802.7 347.8 802.7 C351.1 802.7 353.2 801.2 356.2 799.9 C359.1 798.5 362.4 795.7 365.5 794.6 C368.6 793.5 370.2 793.3 374.9 793.3 C379.6 793.3 388.6 794.9 393.6 794.8 C398.6 794.6 400.8 794.4 404.9 792.4 C409.0 790.4 413.6 786.1 418.0 783.0 C422.4 779.9 427.8 775.4 431.1 773.6 C434.4 771.8 435.3 771.8 437.6 772.1 C439.9 772.4 442.1 772.4 445.1 775.5 C448.1 778.6 451.8 785.2 455.4 790.5 C459.0 795.8 462.6 802.6 466.7 807.3 C470.8 812.0 475.8 816.1 479.8 818.6 C483.9 821.1 487.6 822.0 491.0 822.3 C494.4 822.6 496.3 820.9 500.0 820.3 C503.7 819.7 508.1 818.9 513.1 818.6 C518.1 818.3 525.3 819.4 530.0 818.6 C534.7 817.8 537.2 816.7 541.2 813.9 C545.2 811.1 550.2 805.3 554.3 801.7 C558.3 798.1 562.1 794.4 565.5 792.4 C568.9 790.4 571.9 789.3 574.9 789.6 C577.9 789.9 580.5 791.6 583.3 794.2 C586.1 796.9 588.5 802.9 591.8 805.5 C595.1 808.1 599.0 810.0 603.0 810.1 C607.0 810.2 611.7 808.0 616.1 806.4 C620.5 804.8 625.8 801.9 629.2 800.8 C632.6 799.7 633.6 799.1 636.7 799.9 C639.8 800.7 643.9 802.9 647.9 805.5 C651.9 808.1 657.2 813.6 661.0 815.8 C664.8 818.0 667.6 818.8 670.4 818.6 C673.2 818.4 675.1 816.4 677.9 814.8 C680.7 813.2 684.8 810.3 687.3 809.2 C689.8 808.1 690.8 808.1 692.9 808.3 C695.0 808.5 697.6 809.4 700.0 810.3 C702.4 811.2 704.9 812.9 707.5 813.9 C710.1 814.9 713.1 816.4 715.9 816.3 C718.7 816.1 721.0 816.0 724.3 813.0 C727.6 810.0 731.9 803.6 735.6 798.0 C739.4 792.4 743.0 784.9 746.8 779.3 C750.5 773.7 755.0 767.4 758.1 764.3 C761.2 761.2 763.2 760.9 765.5 760.9 C767.8 760.9 769.9 763.1 772.1 764.3 C774.3 765.5 776.1 767.5 778.7 768.0 C781.4 768.5 784.6 767.9 788.0 767.1 C791.4 766.3 795.9 764.2 799.3 763.3 C802.7 762.4 805.6 761.5 808.6 761.8 C811.6 762.1 813.9 762.3 817.0 765.2 C820.1 768.1 823.7 774.1 827.3 779.3 C830.9 784.4 834.9 791.1 838.6 796.1 C842.4 801.1 846.1 806.1 849.8 809.2 C853.5 812.3 856.9 813.4 861.0 814.5 C865.1 815.6 869.8 815.6 874.2 816.0 C878.6 816.4 884.1 816.5 887.3 816.7 C890.4 816.9 890.6 816.6 893.1 817.1 C895.6 817.6 899.1 818.2 902.5 819.5 C905.9 820.8 910.0 823.5 913.7 825.1 C917.4 826.8 921.5 828.5 924.9 829.4 C928.3 830.3 931.2 830.7 934.3 830.6 C937.4 830.5 940.9 830.1 943.7 828.9 C946.5 827.7 948.4 826.3 951.2 823.3 C954.0 820.3 957.4 814.9 960.5 811.1 C963.6 807.4 967.1 803.1 969.9 800.8 C972.7 798.4 974.9 797.7 977.4 797.0 C979.9 796.3 982.4 796.4 984.9 796.5 C987.4 796.6 990.1 797.6 992.4 797.6 C994.7 797.6 997.8 796.7 998.9 796.5" stroke="#e0660b" stroke-width="3.45" fill="none" stroke-linecap="round" stroke-linejoin="round"/><path d="M315.4 811.5 C316.3 812.4 318.5 815.1 320.6 816.7 C322.7 818.4 325.3 820.6 328.1 821.4 C330.9 822.2 333.1 821.6 337.5 821.4 C341.9 821.2 349.0 820.0 354.3 820.4 C359.6 820.8 364.3 822.7 369.3 823.8 C374.3 824.9 379.0 826.7 384.3 827.0 C389.6 827.3 395.5 826.3 401.1 825.7 C406.7 825.1 413.6 823.3 418.0 823.3 C422.4 823.3 423.2 823.7 427.3 825.7 C431.4 827.7 437.3 832.4 442.3 835.4 C447.3 838.4 452.9 842.6 457.3 843.9 C461.7 845.2 463.5 843.9 468.5 843.3 C473.5 842.7 482.1 841.1 487.3 840.1 C492.6 839.1 495.4 838.7 500.0 837.3 C504.6 835.9 509.4 834.4 515.0 831.7 C520.6 829.1 527.5 824.8 533.7 821.4 C539.9 818.0 547.4 813.3 552.4 811.1 C557.4 808.9 560.6 808.1 563.7 808.3 C566.8 808.4 568.4 809.4 571.2 812.0 C574.0 814.6 577.4 820.8 580.5 824.2 C583.6 827.6 586.5 830.8 589.9 832.6 C593.3 834.4 596.7 834.9 601.1 835.0 C605.5 835.1 611.1 834.1 616.1 833.2 C621.1 832.3 625.8 830.4 631.1 829.4 C636.4 828.4 643.2 827.1 647.9 827.0 C652.6 826.9 655.1 827.2 659.2 828.9 C663.3 830.6 667.9 834.5 672.3 837.3 C676.7 840.1 680.8 843.5 685.4 845.7 C690.0 848.0 696.0 850.1 700.0 850.8 C704.0 851.5 705.6 851.0 709.4 850.0 C713.1 849.0 717.8 847.4 722.5 844.8 C727.2 842.2 732.5 837.9 737.5 834.5 C742.5 831.1 747.4 827.5 752.4 824.2 C757.4 820.9 762.7 817.9 767.4 814.8 C772.1 811.7 776.4 807.8 780.5 805.5 C784.6 803.2 788.7 801.7 791.8 800.8 C794.9 799.9 796.5 800.0 799.3 800.2 C802.1 800.4 804.5 801.8 808.6 802.1 C812.7 802.5 818.6 802.5 823.6 802.3 C828.6 802.1 833.6 801.0 838.6 800.8 C843.6 800.5 849.2 800.3 853.6 800.8 C858.0 801.3 860.8 802.5 864.8 803.6 C868.8 804.8 873.5 806.6 877.9 807.7 C882.3 808.9 887.4 809.9 891.2 810.5 C895.0 811.1 897.5 811.5 900.6 811.5 C903.7 811.5 907.2 811.3 910.0 810.7 C912.8 810.1 915.2 808.5 917.5 807.7 C919.8 806.9 921.8 805.7 924.0 805.8 C926.2 805.9 928.0 806.5 930.6 808.3 C933.2 810.1 936.8 814.2 939.9 816.7 C943.0 819.2 946.5 821.9 949.3 823.3 C952.1 824.7 954.1 825.1 956.8 825.1 C959.4 825.1 962.4 823.2 965.2 823.3 C968.0 823.4 970.6 825.0 973.6 825.7 C976.6 826.4 979.9 827.4 983.0 827.6 C986.1 827.8 989.8 827.2 992.4 827.0 C995.0 826.8 997.8 826.2 998.9 826.1" stroke="#b97fd6" stroke-width="3.45" fill="none" stroke-linecap="round" stroke-linejoin="round"/></svg>
<div class="t" style="right:1314.3px;top:614px;font-size:10px;line-height:11px;color:#68737d;font-weight:400;letter-spacing:-0.33px;">1,500</div>
<div class="t" style="right:1314.3px;top:653px;font-size:10px;line-height:11px;color:#68737d;font-weight:400;letter-spacing:-0.33px;">1,250</div>
<div class="t" style="right:1314.3px;top:692px;font-size:10px;line-height:11px;color:#68737d;font-weight:400;letter-spacing:-0.33px;">1,000</div>
<div class="t" style="right:1314.3px;top:731px;font-size:10px;line-height:11px;color:#68737d;font-weight:400;letter-spacing:-0.33px;">750</div>
<div class="t" style="right:1314.3px;top:770px;font-size:10px;line-height:11px;color:#68737d;font-weight:400;letter-spacing:-0.33px;">500</div>
<div class="t" style="right:1314.3px;top:809px;font-size:10px;line-height:11px;color:#68737d;font-weight:400;letter-spacing:-0.33px;">250</div>
<div class="t" style="right:1314.3px;top:847px;font-size:10px;line-height:11px;color:#68737d;font-weight:400;letter-spacing:-0.33px;">0</div>
<div class="t" style="right:554.5999999999999px;top:614px;font-size:10px;line-height:11px;color:#68737d;font-weight:400;letter-spacing:-0.5px;">100%</div>
<div class="t" style="right:554.5999999999999px;top:661px;font-size:10px;line-height:11px;color:#68737d;font-weight:400;letter-spacing:-0.5px;">80%</div>
<div class="t" style="right:554.5999999999999px;top:708px;font-size:10px;line-height:11px;color:#68737d;font-weight:400;letter-spacing:-0.5px;">60%</div>
<div class="t" style="right:554.5999999999999px;top:754px;font-size:10px;line-height:11px;color:#68737d;font-weight:400;letter-spacing:-0.5px;">40%</div>
<div class="t" style="right:554.5999999999999px;top:801px;font-size:10px;line-height:11px;color:#68737d;font-weight:400;letter-spacing:-0.5px;">20%</div>
<div class="t" style="right:554.5999999999999px;top:847px;font-size:10px;line-height:11px;color:#68737d;font-weight:400;letter-spacing:-0.5px;">0</div>
<div class="t" style="left:294.9px;top:871px;font-size:10px;line-height:11px;color:#68737d;font-weight:400;letter-spacing:-0.25px;">Jan 1</div>
<div class="t" style="left:465.9px;top:871px;font-size:10px;line-height:11px;color:#68737d;font-weight:400;letter-spacing:-0.25px;">Jan 7</div>
<div class="t" style="left:637.1px;top:871px;font-size:10px;line-height:11px;color:#68737d;font-weight:400;letter-spacing:-0.25px;">Jan 14</div>
<div class="t" style="left:813.4000000000001px;top:871px;font-size:10px;line-height:11px;color:#68737d;font-weight:400;letter-spacing:-0.25px;">Jan 21</div>
<div class="t" style="left:988.7px;top:871px;font-size:10px;line-height:11px;color:#68737d;font-weight:400;letter-spacing:-0.25px;">Jan 28</div>
<svg class="b" style="left:282.9px;top:895px" width="9" height="9" viewBox="282.9 895 9 9"><circle cx="287.1" cy="899.5" r="3.25" fill="#e6e6fa"/></svg>
<div class="t" style="left:294.1px;top:894px;font-size:10.15px;line-height:11px;color:#68737d;font-weight:400;">Total Volume</div>
<svg class="b" style="left:368.4px;top:895px" width="9" height="9" viewBox="368.4 895 9 9"><circle cx="372.6" cy="899.5" r="3.25" fill="#3b5bdb"/></svg>
<div class="t" style="left:380.2px;top:894px;font-size:10.15px;line-height:11px;color:#68737d;font-weight:400;">Understood conversations</div>
<svg class="b" style="left:515.2px;top:895px" width="9" height="9" viewBox="515.2 895 9 9"><circle cx="519.4" cy="899.5" r="3.25" fill="#f5cd3d"/></svg>
<div class="t" style="left:526.7px;top:894px;font-size:10.15px;line-height:11px;color:#68737d;font-weight:400;">Escalated conversations</div>
<svg class="b" style="left:653.3px;top:895px" width="9" height="9" viewBox="653.3 895 9 9"><circle cx="657.5" cy="899.5" r="3.25" fill="#4fa588"/></svg>
<div class="t" style="left:664.1px;top:894px;font-size:10.15px;line-height:11px;color:#68737d;font-weight:400;">Assisted conversations</div>
<svg class="b" style="left:784.8px;top:895px" width="9" height="9" viewBox="784.8 895 9 9"><circle cx="789.0" cy="899.5" r="3.25" fill="#e07020"/></svg>
<div class="t" style="left:795.8px;top:894px;font-size:10.15px;line-height:11px;color:#68737d;font-weight:400;">Handled conversations</div>
<svg class="b" style="left:915.6px;top:895px" width="9" height="9" viewBox="915.6 895 9 9"><circle cx="919.8" cy="899.5" r="3.25" fill="#b57edc"/></svg>
<div class="t" style="left:926.6px;top:894px;font-size:10.15px;line-height:11px;color:#68737d;font-weight:400;">Automated Resolutions</div>
<div class="b" style="left:202px;top:958.6px;width:1398px;height:2.4px;background:#f3f4f5;"></div>
</body></html>
